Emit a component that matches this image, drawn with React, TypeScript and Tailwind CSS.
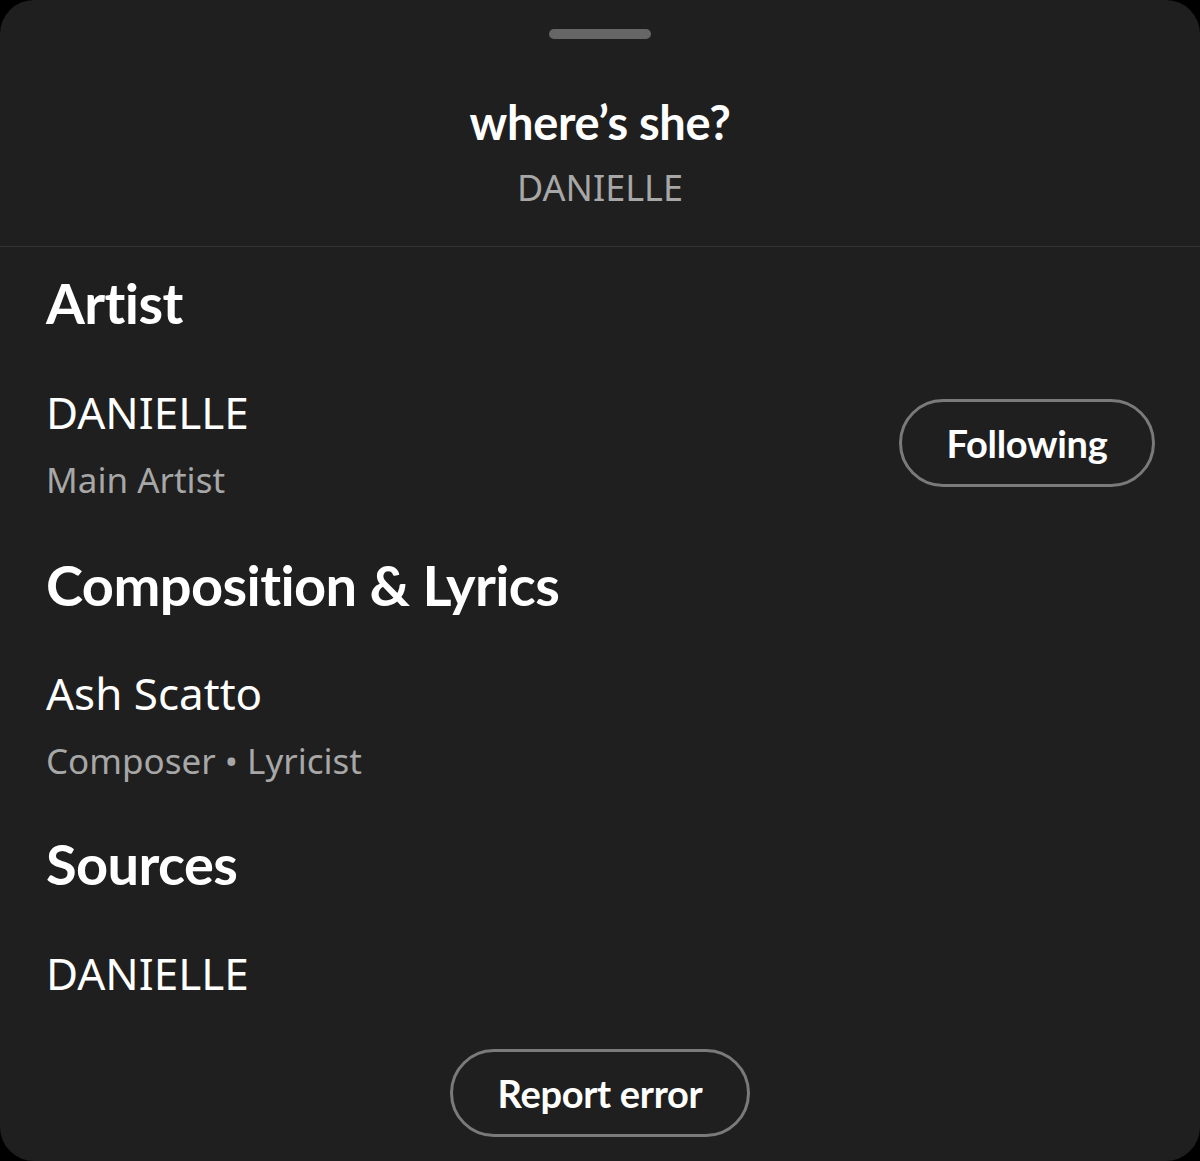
import React from 'react'

const heading = "font-['Lato','Noto_Sans',sans-serif] font-bold text-white"
const body = "font-['Noto_Sans','Open_Sans',sans-serif]"

function SectionTitle({ children, className = '' }: { children: React.ReactNode; className?: string }) {
  return (
    <h2 className={`${heading} h-[60px] text-[56px] leading-[60px] tracking-[-0.6px] ${className}`}>
      {children}
    </h2>
  )
}

function Credit({ name, role }: { name: string; role?: string }) {
  return (
    <div>
      <p className={`${body} h-[56px] text-[44px] leading-[56px] text-white`}>{name}</p>
      {role && (
        <p className={`${body} mt-[18px] h-[44px] text-[35px] leading-[44px] text-[#a7a7a7]`}>{role}</p>
      )}
    </div>
  )
}

function OutlineButton({ label, className = '' }: { label: string; className?: string }) {
  return (
    <button
      className={`${heading} flex h-[88px] items-center justify-center rounded-full border-[3px] border-[#7a7a7a] text-[38px] tracking-[-0.3px] ${className}`}
    >
      {label}
    </button>
  )
}

export default function App() {
  return (
    <div className="min-h-[1161px] w-full bg-black">
      <div className="flex h-[1161px] w-full flex-col overflow-hidden rounded-[34px] bg-[#1f1f1f]">
        {/* header */}
        <div className="flex flex-col items-center border-b border-[#333333] pb-[38px] pt-[29px]">
          <div className="h-[10px] w-[102px] rounded-full bg-[#666666]" />
          <h1 className={`${heading} mt-[58px] h-[50px] text-[47px] leading-[50px] tracking-[-0.3px]`}>where’s she?</h1>
          <p className={`${body} mt-[21px] h-[40px] text-[36px] leading-[40px] text-[#a7a7a7]`}>DANIELLE</p>
        </div>

        <div className="flex flex-1 flex-col px-[46px]">
          <SectionTitle className="mt-[26px]">Artist</SectionTitle>
          <div className="mt-[51px] flex items-center justify-between">
            <Credit name="DANIELLE" role="Main Artist" />
            <OutlineButton label="Following" className="mr-[-1px] w-[256px]" />
          </div>

          <SectionTitle className="mt-[53px]">Composition &amp; Lyrics</SectionTitle>
          <div className="mt-[50px]">
            <Credit name="Ash Scatto" role="Composer • Lyricist" />
          </div>

          <SectionTitle className="mt-[51px]">Sources</SectionTitle>
          <div className="mt-[51px]">
            <Credit name="DANIELLE" />
          </div>

          <div className="mt-[48px] flex justify-center">
            <OutlineButton label="Report error" className="w-[300px]" />
          </div>
        </div>
      </div>
    </div>
  )
}
